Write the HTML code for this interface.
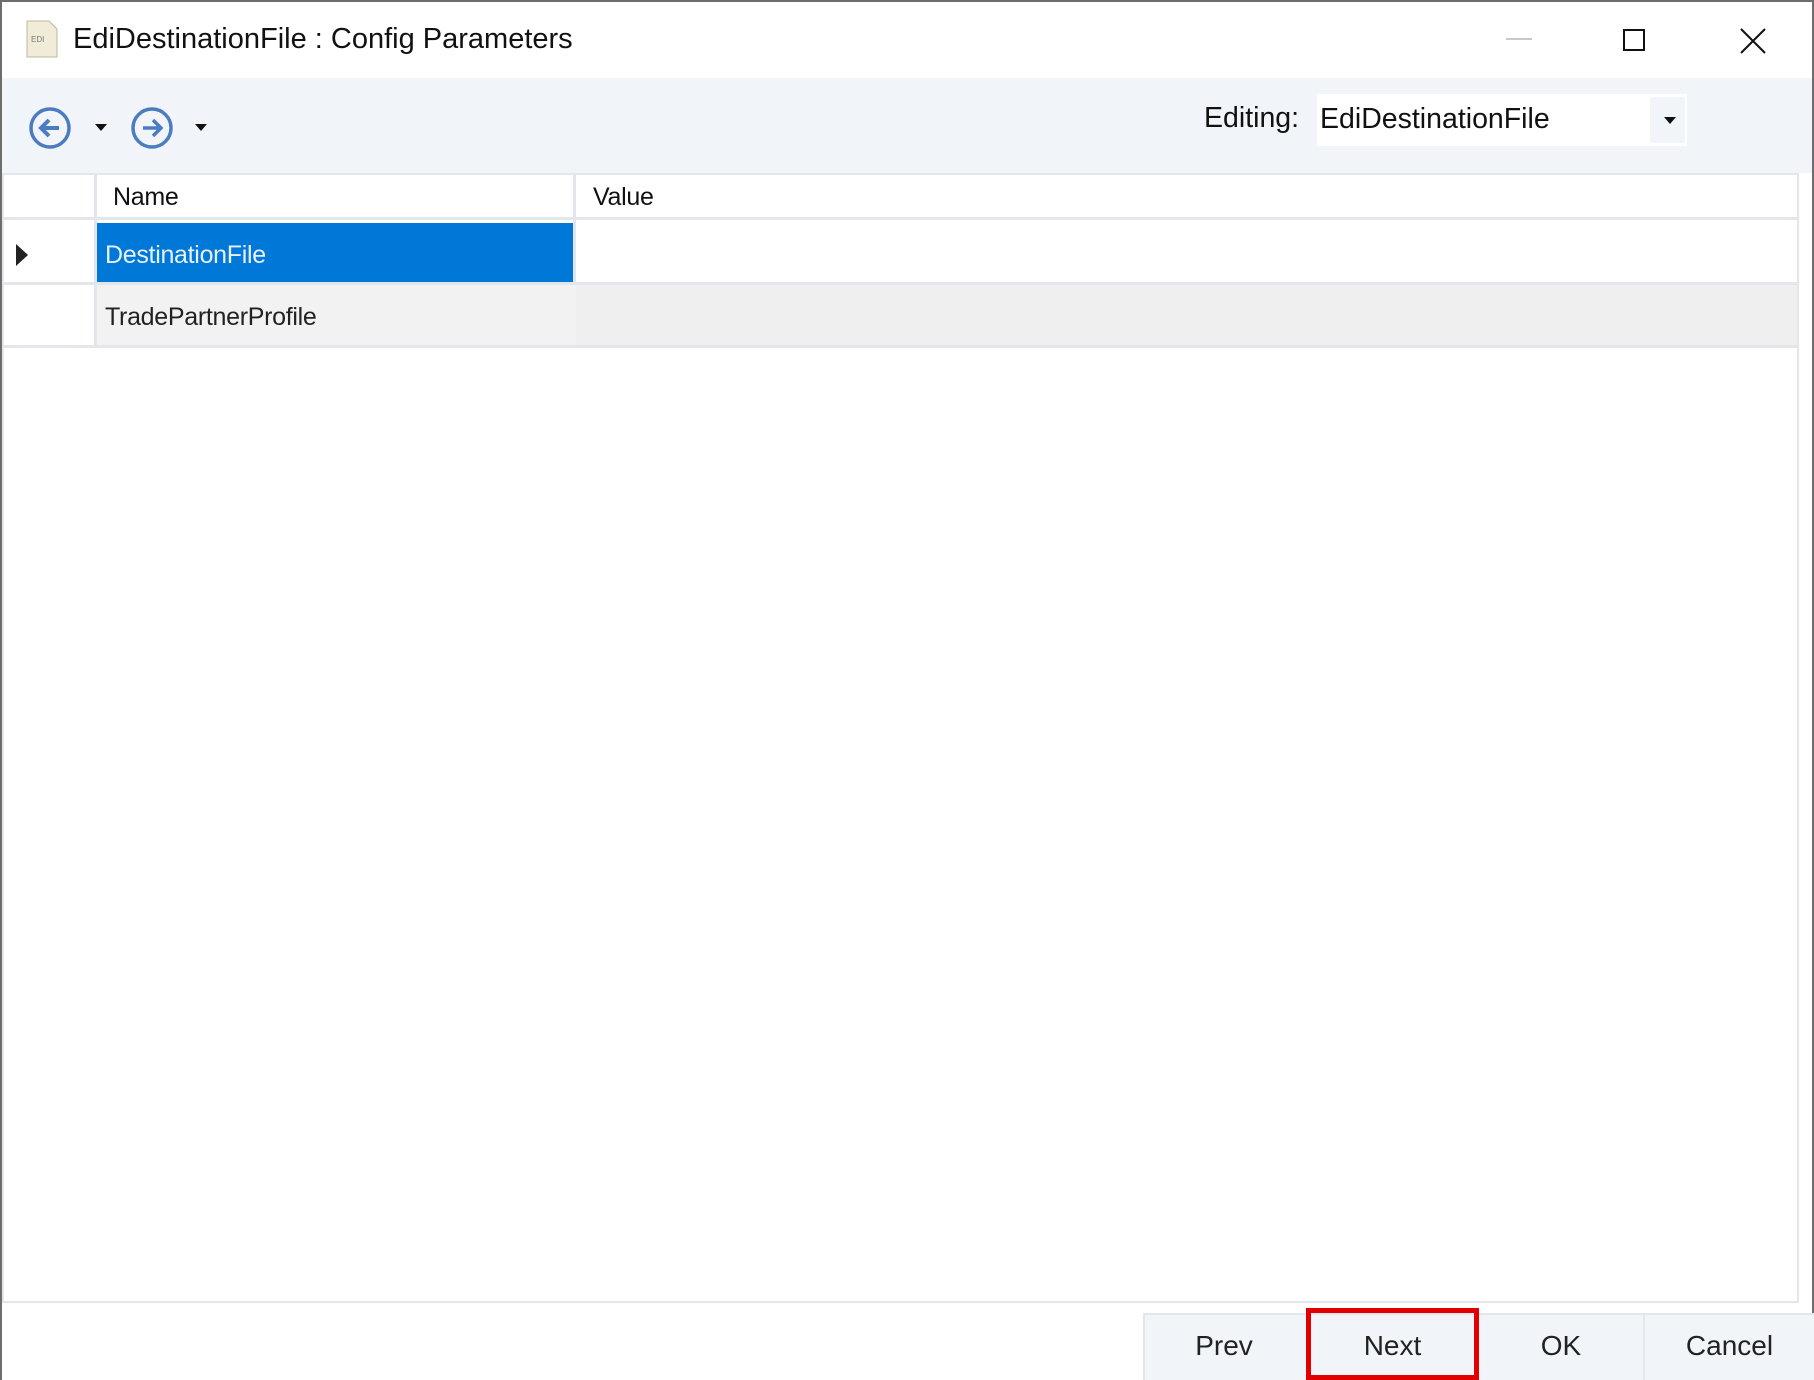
<!DOCTYPE html>
<html><head><meta charset="utf-8"><style>
*{margin:0;padding:0;box-sizing:border-box}
body{width:1814px;height:1380px;overflow:hidden;background:#fff;font-family:"Liberation Sans",sans-serif;position:relative}
.a{position:absolute}
</style></head><body>
<div class="a" style="left:0;top:0;width:1814px;height:1380px;border:2px solid #6d6d6d;border-bottom:none"></div>
<!-- title -->
<svg class="a" style="left:26px;top:20px" width="32" height="38" viewBox="0 0 32 38"><path d="M1 1h22l8 8v28H1z" fill="#f1ecd8" stroke="#bdb8a4"/><text x="5" y="22" font-size="8" fill="#777" font-family="Liberation Sans">EDI</text></svg>
<div class="a" style="left:73px;top:23px;font-size:29px;color:#111">EdiDestinationFile : Config Parameters</div>
<div class="a" style="left:1506px;top:38px;width:26px;height:2px;background:#c8c8c8"></div>
<div class="a" style="left:1623px;top:29px;width:22px;height:22px;border:2px solid #111"></div>
<svg class="a" style="left:1740px;top:28px" width="26" height="26"><path d="M1 1L25 25M25 1L1 25" stroke="#111" stroke-width="2"/></svg>
<!-- toolbar -->
<div class="a" style="left:2px;top:78px;width:1810px;height:95px;background:#f1f5f9"></div>
<svg class="a" style="left:28px;top:106px" width="46" height="46" viewBox="0 0 46 46"><circle cx="22" cy="22" r="19" fill="none" stroke="#4b7cc0" stroke-width="3.5"/><path d="M31 22H14M21 14l-8 8 8 8" fill="none" stroke="#4b7cc0" stroke-width="4"/></svg>
<svg class="a" style="left:95px;top:124px" width="12" height="8"><path d="M0 0h12L6 7z" fill="#111"/></svg>
<svg class="a" style="left:130px;top:106px" width="46" height="46" viewBox="0 0 46 46"><circle cx="22" cy="22" r="19" fill="none" stroke="#4b7cc0" stroke-width="3.5"/><path d="M13 22h17M23 14l8 8-8 8" fill="none" stroke="#4b7cc0" stroke-width="3.5"/></svg>
<svg class="a" style="left:195px;top:124px" width="12" height="8"><path d="M0 0h12L6 7z" fill="#111"/></svg>
<div class="a" style="left:1204px;top:102px;font-size:28.5px;color:#111">Editing:</div>
<div class="a" style="left:1317px;top:94px;width:370px;height:52px;background:#fff"></div>
<div class="a" style="left:1320px;top:103px;font-size:28.5px;color:#111">EdiDestinationFile</div>
<div class="a" style="left:1650px;top:97px;width:35px;height:46px;background:#f1f5f9"></div>
<svg class="a" style="left:1664px;top:117px" width="12" height="8"><path d="M0 0h12L6 7z" fill="#111"/></svg>
<!-- grid -->
<div class="a" style="left:2px;top:173px;width:1797px;height:1130px;border:2px solid #e3e6ea;background:#fff"></div>
<div class="a" style="left:4px;top:175px;width:1793px;height:45px;border-bottom:3px solid #e3e6ea"></div>
<div class="a" style="left:94px;top:175px;width:3px;height:170px;background:#e3e6ea"></div>
<div class="a" style="left:573px;top:175px;width:3px;height:170px;background:#e3e6ea"></div>
<div class="a" style="left:113px;top:183px;font-size:25px;letter-spacing:-0.3px;color:#111">Name</div>
<div class="a" style="left:593px;top:183px;font-size:25px;letter-spacing:-0.3px;color:#111">Value</div>
<div class="a" style="left:97px;top:223px;width:476px;height:59px;background:#0078d7"></div>
<div class="a" style="left:105px;top:241px;font-size:25px;letter-spacing:-0.3px;color:#e8f0fa">DestinationFile</div>
<svg class="a" style="left:16px;top:244px" width="12" height="22"><path d="M0 0L12 11 0 22z" fill="#222"/></svg>
<div class="a" style="left:4px;top:282px;width:1793px;height:3px;background:#e3e6ea"></div>
<div class="a" style="left:97px;top:285px;width:1700px;height:60px;background:#f2f2f2"></div>
<div class="a" style="left:576px;top:285px;width:1221px;height:60px;background:#efefef"></div>
<div class="a" style="left:105px;top:303px;font-size:25px;letter-spacing:-0.3px;color:#222">TradePartnerProfile</div>
<div class="a" style="left:4px;top:345px;width:1793px;height:3px;background:#e3e6ea"></div>
<!-- buttons -->
<div class="a" style="left:1143px;top:1313px;width:671px;height:67px;background:#f1f5f9;border-top:2px solid #e3e6ea;border-left:2px solid #e3e6ea"></div>
<div class="a" style="left:1643px;top:1315px;width:2px;height:65px;background:#e3e6ea"></div>
<div class="a" style="left:1306px;top:1308px;width:173px;height:72px;border:5px solid #e00000"></div>
<div class="a" style="left:1143px;top:1330px;width:162px;text-align:center;font-size:28px;color:#222">Prev</div>
<div class="a" style="left:1306px;top:1330px;width:173px;text-align:center;font-size:28px;color:#222">Next</div>
<div class="a" style="left:1479px;top:1330px;width:164px;text-align:center;font-size:28px;color:#222">OK</div>
<div class="a" style="left:1645px;top:1330px;width:169px;text-align:center;font-size:28px;color:#222">Cancel</div>
</body></html>
